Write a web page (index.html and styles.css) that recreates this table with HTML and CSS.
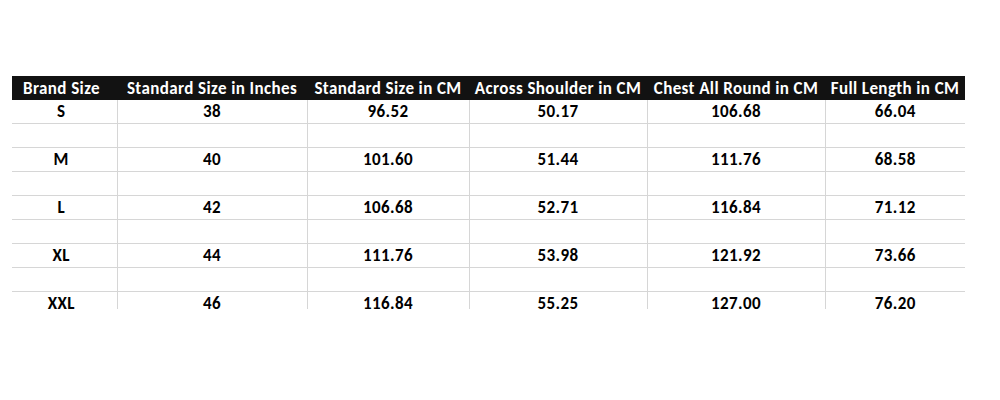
FILE: index.html
```html
<!DOCTYPE html>
<html>
<head>
<meta charset="utf-8">
<link rel="stylesheet" href="styles.css">
</head>
<body>
<div class="clip">
<table class="chart">
<colgroup>
<col class="c1"><col class="c2"><col class="c3"><col class="c4"><col class="c5"><col class="c6">
</colgroup>
<thead>
<tr><th>Brand Size</th><th>Standard Size in Inches</th><th>Standard Size in CM</th><th>Across Shoulder in CM</th><th>Chest All Round in CM</th><th>Full Length in CM</th></tr>
</thead>
<tbody>
<tr><td>S</td><td>38</td><td>96.52</td><td>50.17</td><td>106.68</td><td>66.04</td></tr>
<tr><td></td><td></td><td></td><td></td><td></td><td></td></tr>
<tr><td>M</td><td>40</td><td>101.60</td><td>51.44</td><td>111.76</td><td>68.58</td></tr>
<tr><td></td><td></td><td></td><td></td><td></td><td></td></tr>
<tr><td>L</td><td>42</td><td>106.68</td><td>52.71</td><td>116.84</td><td>71.12</td></tr>
<tr><td></td><td></td><td></td><td></td><td></td><td></td></tr>
<tr><td>XL</td><td>44</td><td>111.76</td><td>53.98</td><td>121.92</td><td>73.66</td></tr>
<tr><td></td><td></td><td></td><td></td><td></td><td></td></tr>
<tr><td>XXL</td><td>46</td><td>116.84</td><td>55.25</td><td>127.00</td><td>76.20</td></tr>
</tbody>
</table>
</div>
</body>
</html>
```
FILE: styles.css
```css
html, body {
  margin: 0;
  padding: 0;
  background: #ffffff;
}
body {
  padding-top: 76px;
  padding-left: 12px;
}
.clip {
  width: 953px;
  height: 233px;
  overflow: hidden;
}
.chart {
  border-collapse: collapse;
  table-layout: fixed;
  width: 953px;
  font-family: "Carlito", "Lato", "Liberation Sans", sans-serif;
  font-weight: 700;
  font-size: 17px;
  letter-spacing: 0.4px;
  color: #000;
}
.c1 { width: 105px; }
.c2 { width: 190px; }
.c3 { width: 162px; }
.c4 { width: 178px; }
.c5 { width: 178px; }
.c6 { width: 140px; }
.chart th {
  background: #121212;
  color: #ffffff;
  height: 24px;
  padding: 0;
  text-align: center;
  white-space: nowrap;
  font-weight: 700;
}
.chart th:first-child {
  padding-right: 6px;
}
.chart td {
  height: 22px;
  padding: 1px 0 0 0;
  line-height: 20px;
  text-align: center;
  border-bottom: 1px solid #d6d6d6;
  border-left: 1px solid #d6d6d6;
}
.chart td:first-child {
  border-left: none;
  padding-right: 6px;
}
```
